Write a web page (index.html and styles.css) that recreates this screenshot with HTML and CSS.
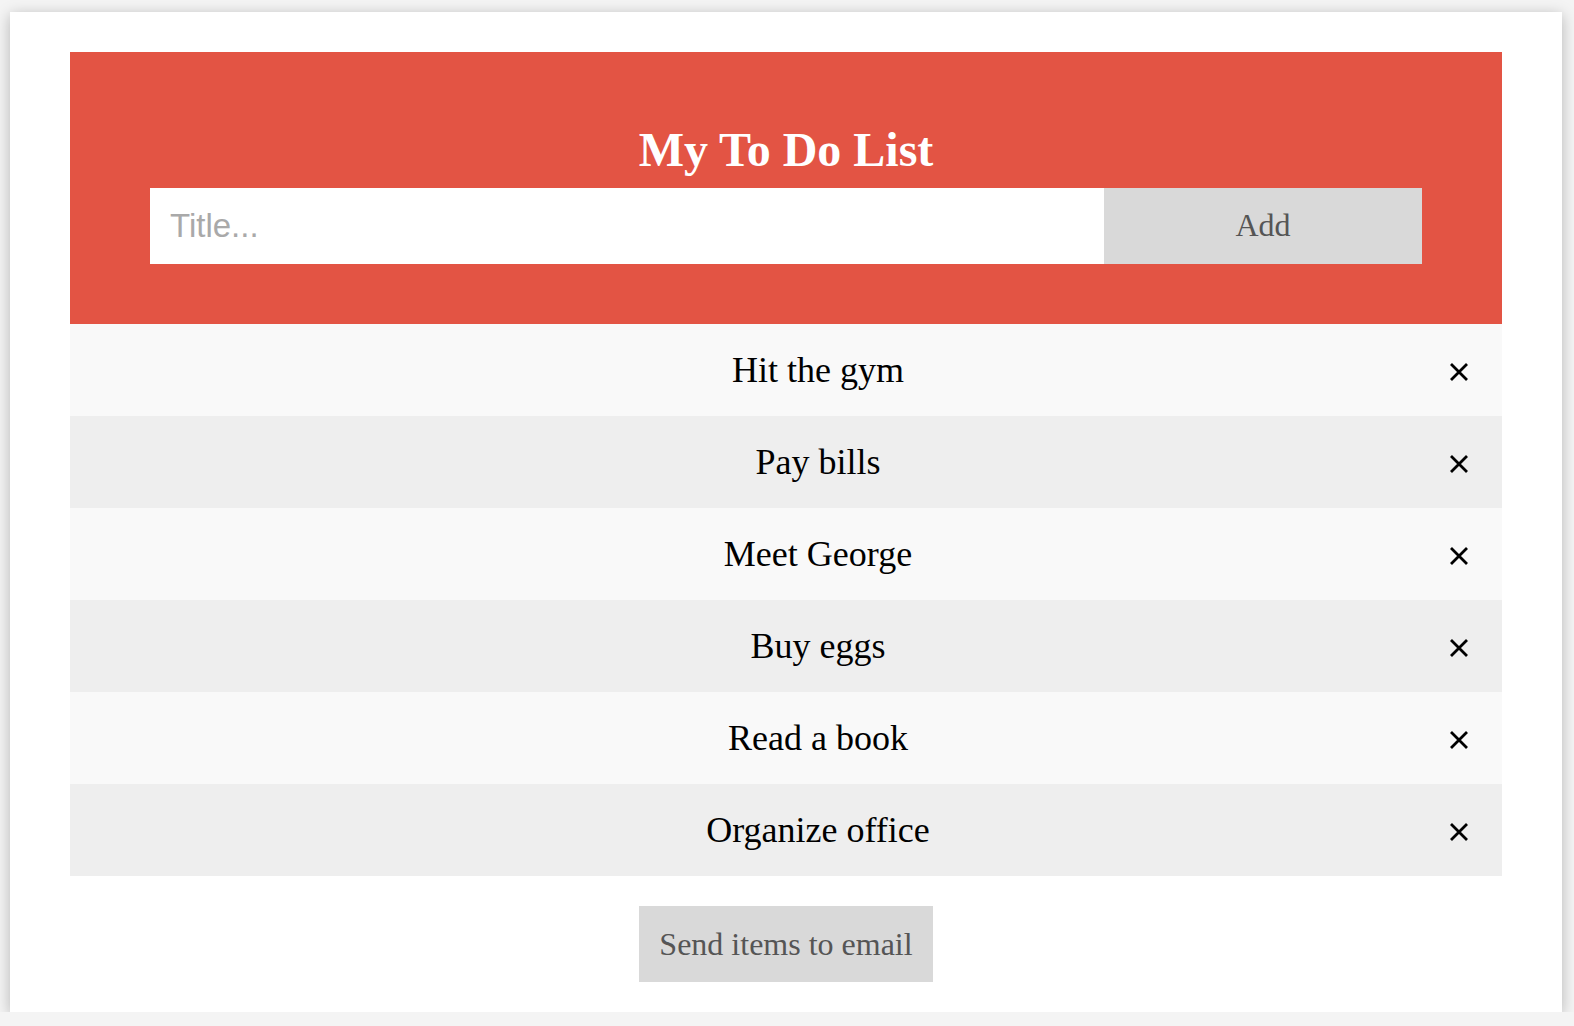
FILE: index.html
```html
<!DOCTYPE html>
<html lang="en">
<head>
<meta charset="utf-8">
<title>My To Do List</title>
<link rel="stylesheet" href="styles.css">
</head>
<body>
<div class="frame">
  <div class="header">
    <h2 class="title">My To Do List</h2>
    <div class="entry">
      <input class="entry-input" type="text" placeholder="Title...">
      <span class="add-btn">Add</span>
    </div>
  </div>
  <ul class="list">
    <li class="item">Hit the gym<span class="close"><svg viewBox="0 0 18 18" width="18" height="18"><path d="M1 1L17 17M17 1L1 17" /></svg></span></li>
    <li class="item">Pay bills<span class="close"><svg viewBox="0 0 18 18" width="18" height="18"><path d="M1 1L17 17M17 1L1 17" /></svg></span></li>
    <li class="item">Meet George<span class="close"><svg viewBox="0 0 18 18" width="18" height="18"><path d="M1 1L17 17M17 1L1 17" /></svg></span></li>
    <li class="item">Buy eggs<span class="close"><svg viewBox="0 0 18 18" width="18" height="18"><path d="M1 1L17 17M17 1L1 17" /></svg></span></li>
    <li class="item">Read a book<span class="close"><svg viewBox="0 0 18 18" width="18" height="18"><path d="M1 1L17 17M17 1L1 17" /></svg></span></li>
    <li class="item">Organize office<span class="close"><svg viewBox="0 0 18 18" width="18" height="18"><path d="M1 1L17 17M17 1L1 17" /></svg></span></li>
  </ul>
  <div class="footer">
    <span class="send-btn">Send items to email</span>
  </div>
</div>
</body>
</html>
```

FILE: styles.css
```css
html, body {
  margin: 0;
  padding: 0;
  background: #f4f4f4;
}

body {
  font-family: "Liberation Serif", "Times New Roman", serif;
  overflow: hidden;
}

.frame {
  box-sizing: border-box;
  width: 1552px;
  height: 1000px;
  margin: 12px 12px 0 10px;
  padding: 40px 60px 30px;
  background: #ffffff;
  box-shadow: 0 3px 14px rgba(0, 0, 0, 0.26);
}

.header {
  background: #e35444;
  padding: 60px 80px;
  color: #ffffff;
  text-align: center;
}

.title {
  margin: 0;
  font-size: 48px;
  font-weight: bold;
  line-height: 76px;
}

.entry {
  display: flex;
  height: 76px;
}

.entry-input {
  box-sizing: border-box;
  width: 75%;
  height: 76px;
  margin: 0;
  padding: 0 20px;
  border: none;
  border-radius: 0;
  outline: none;
  background: #ffffff;
  font-family: "Liberation Sans", Arial, sans-serif;
  font-size: 33px;
  color: #333;
}

.entry-input::placeholder {
  color: #a9a9a9;
}

.add-btn {
  width: 25%;
  background: #d9d9d9;
  color: #555555;
  font-size: 32px;
  line-height: 74px;
  text-align: center;
}

.list {
  margin: 0;
  padding: 0;
  list-style: none;
}

.item {
  position: relative;
  padding: 24px 16px 24px 80px;
  font-size: 36px;
  line-height: 44px;
  text-align: center;
  color: #000;
  background: #f9f9f9;
}

.item:nth-child(even) {
  background: #eeeeee;
}

.close {
  position: absolute;
  right: 34px;
  top: 39px;
  width: 18px;
  height: 18px;
  line-height: 0;
}

.close svg path {
  stroke: #000;
  stroke-width: 2.8;
  fill: none;
}

.footer {
  margin-top: 30px;
  text-align: center;
}

.send-btn {
  display: inline-block;
  padding: 0 20px;
  background: #d9d9d9;
  color: #555555;
  font-size: 32px;
  line-height: 76px;
}
```
